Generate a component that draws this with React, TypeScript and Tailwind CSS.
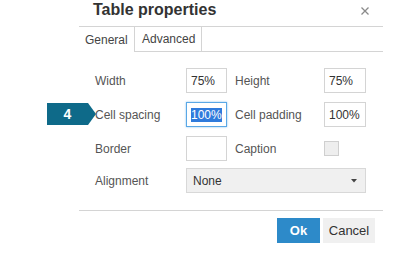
import React from "react";

function Label({ children, w }: { children: React.ReactNode; w: string }) {
  return <div className={`${w} text-[12px] leading-[14px] text-[#555]`}>{children}</div>;
}

function Input({ value, w, focused }: { value?: string; w: string; focused?: boolean }) {
  return (
    <div
      className={`${w} h-[25px] flex items-center pl-[4px] text-[12px] text-[#333] bg-white border ${
        focused ? "border-[#5aa8e6] shadow-[0_0_2px_#8cc4ef]" : "border-[#d4d4d4]"
      }`}
    >
      {focused ? (
        <span className="bg-[#2f7bdc] text-white leading-[14px]">{value}</span>
      ) : (
        <span className="leading-[14px]">{value}</span>
      )}
    </div>
  );
}

export default function App() {
  return (
    <div
      className="relative w-[396px] h-[255px] bg-white overflow-hidden"
      style={{ fontFamily: '"Liberation Sans", Arial, sans-serif' }}
    >
      <div className="ml-[79px] w-[304px] flex flex-col">
        {/* header */}
        <div className="h-[26px] flex items-start justify-between">
          <div className="pl-[14px] pt-[1px] text-[16px] leading-[18px] font-bold text-[#333]">
            Table properties
          </div>
          <div className="mr-[14px] mt-[7px]">
            <svg width="8" height="8" viewBox="0 0 8 8">
              <path d="M0.5 0.5 L7.5 7.5 M7.5 0.5 L0.5 7.5" stroke="#8a8a8a" strokeWidth="1.3" />
            </svg>
          </div>
        </div>
        {/* tabs */}
        <div className="flex h-[26px] border-t border-[#d4d4d4]">
          <div className="w-[55px] flex items-center pl-[6px] text-[12px] text-[#444]">General</div>
          <div className="w-[68px] flex items-center pl-[7px] text-[12px] text-[#444] border-l border-r border-b border-[#d4d4d4]">
            Advanced
          </div>
          <div className="flex-1 border-b border-[#d4d4d4]" />
        </div>
        {/* body */}
        <div className="h-[158px] pt-[16px] pl-[16px] flex flex-col gap-[9px]">
          <div className="flex items-center">
            <Label w="w-[91px]">Width</Label>
            <Input value="75%" w="w-[41px]" />
            <div className="w-[8px]" />
            <Label w="w-[89px]">Height</Label>
            <Input value="75%" w="w-[42px]" />
          </div>
          <div className="flex items-center">
            <Label w="w-[91px]">Cell spacing</Label>
            <Input value="100%" w="w-[41px]" focused />
            <div className="w-[8px]" />
            <Label w="w-[89px]">Cell padding</Label>
            <Input value="100%" w="w-[42px]" />
          </div>
          <div className="flex items-center">
            <Label w="w-[91px]">Border</Label>
            <Input value="" w="w-[41px]" />
            <div className="w-[8px]" />
            <Label w="w-[89px]">Caption</Label>
            <div className="w-[15px] h-[15px] bg-[#eeeeee] border border-[#cfcfcf]" />
          </div>
          <div className="flex items-center -mt-[2px]">
            <Label w="w-[91px]">Alignment</Label>
            <div className="w-[180px] h-[25px] flex items-center justify-between pl-[6px] pr-[8px] bg-[#f0f0f0] border border-[#d8d8d8] text-[12px] text-[#333]">
              <span>None</span>
              <svg width="6" height="4" viewBox="0 0 6 4">
                <path d="M0 0 L6 0 L3 3.5 Z" fill="#444" />
              </svg>
            </div>
          </div>
        </div>
        {/* footer */}
        <div className="border-t border-[#d4d4d4] pt-[7px] pr-[8px] flex justify-end gap-[3px]">
          <div className="w-[43px] h-[25px] flex items-center justify-center bg-[#2d8ac9] text-white text-[13px] font-bold">
            Ok
          </div>
          <div className="w-[52px] h-[25px] flex items-center justify-center bg-[#f0f0f0] text-[#333] text-[13px]">
            Cancel
          </div>
        </div>
      </div>
      {/* callout badge */}
      <div className="absolute left-[47px] top-[103px] h-[22px] flex">
        <div className="w-[41px] h-[22px] bg-[#0e6a89] flex items-center justify-center text-white text-[14px] font-bold">
          4
        </div>
        <svg width="8" height="22" viewBox="0 0 8 22" className="block">
          <path d="M0 0 L8 11 L0 22 Z" fill="#0e6a89" />
        </svg>
      </div>
    </div>
  );
}
